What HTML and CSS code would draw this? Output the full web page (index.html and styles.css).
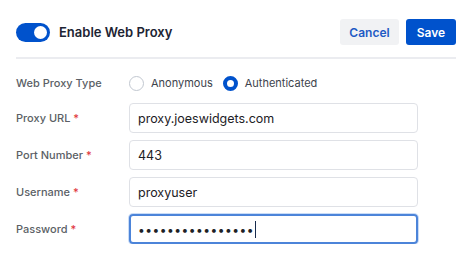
FILE: index.html
```html
<!DOCTYPE html>
<html lang="en">
<head>
  <meta charset="UTF-8" />
  <meta name="viewport" content="width=device-width, initial-scale=1.0" />
  <title>Web Proxy</title>
  <link rel="stylesheet" href="styles.css">
</head>
<body>
  <div class="panel">
    <div class="header">
      <label class="switch">
        <input type="checkbox" checked>
        <span class="slider"></span>
      </label>
      <h2>Enable Web Proxy</h2>
      <div class="actions">
        <button type="button" class="btn btn-subtle">Cancel</button>
        <button type="button" class="btn btn-primary">Save</button>
      </div>
    </div>

    <form class="form">
      <div class="row radio-row">
        <span class="label">Web Proxy Type</span>
        <label class="radio"><input type="radio" name="type"><span class="dot"></span>Anonymous</label>
        <label class="radio"><input type="radio" name="type" checked><span class="dot"></span>Authenticated</label>
      </div>
      <div class="row">
        <label class="label" for="url">Proxy URL <span class="req">*</span></label>
        <input class="field" id="url" type="text" value="proxy.joeswidgets.com">
      </div>
      <div class="row">
        <label class="label" for="port">Port Number <span class="req">*</span></label>
        <input class="field" id="port" type="text" value="443">
      </div>
      <div class="row">
        <label class="label" for="user">Username <span class="req">*</span></label>
        <input class="field" id="user" type="text" value="proxyuser">
      </div>
      <div class="row">
        <label class="label" for="pass">Password <span class="req">*</span></label>
        <div class="field focused"><span class="dots">••••••••••••••••</span><span class="caret"></span></div>
      </div>
    </form>
  </div>
</body>
</html>
```

FILE: styles.css
```css
:root {
  --blue: #0052cc;
  --text: #172b4d;
  --muted: #5e6c84;
  --border: #dfe1e6;
}

body {
  margin: 0;
  background: #fff;
  font-family: Inter, 'Noto Sans', sans-serif;
  color: var(--text);
}

.panel {
  padding: 19px 16px 0 16px;
  width: 440px;
}

.header {
  display: flex;
  align-items: center;
  height: 26px;
  padding-bottom: 12px;
  border-bottom: 2px solid #ebecf0;
}

.switch {
  position: relative;
  width: 34px;
  height: 19px;
  margin-right: 9px;
}

.switch input {
  display: none;
}

.slider {
  display: block;
  width: 34px;
  height: 19px;
  border-radius: 10px;
  background: var(--blue);
}

.slider::after {
  content: "";
  position: absolute;
  top: 3px;
  right: 3px;
  width: 13px;
  height: 13px;
  border-radius: 50%;
  background: #fff;
}

.header h2 {
  margin: 0;
  font-size: 13px;
  font-weight: 600;
  color: #1d2433;
  flex: 1;
}

.actions {
  display: flex;
  gap: 7px;
}

.btn {
  font-family: inherit;
  font-size: 12px;
  font-weight: 600;
  height: 26px;
  border: none;
  border-radius: 3px;
  padding: 0;
  cursor: pointer;
}

.btn-subtle {
  background: #f1f2f4;
  color: #1f5bc4;
  width: 59px;
}

.btn-primary {
  background: var(--blue);
  color: #fff;
  width: 50px;
}

.form {
  display: flex;
  flex-direction: column;
  gap: 7px;
  padding-top: 9px;
}

.row {
  display: flex;
  align-items: center;
  height: 30px;
}

.radio-row {
  margin-bottom: -2px;
}

.label {
  width: 113px;
  flex: none;
  font-size: 11px;
  font-weight: 500;
  color: #5b5f66;
}

.req {
  color: #e0343a;
}

.radio {
  display: flex;
  align-items: center;
  font-size: 11px;
  color: #3d434c;
  margin-right: 10px;
}

.radio input {
  display: none;
}

.dot {
  box-sizing: border-box;
  width: 15px;
  height: 15px;
  border-radius: 50%;
  border: 1.5px solid #c1c7d0;
  margin-right: 7px;
}

.radio input:checked + .dot {
  border: 4.5px solid var(--blue);
  background: #fff;
}

.field {
  box-sizing: border-box;
  width: 289px;
  height: 30px;
  border: 1px solid var(--border);
  border-radius: 4px;
  padding: 0 8px;
  font-family: inherit;
  font-size: 12.5px;
  color: #1d2125;
  outline: none;
}

.field.focused {
  display: flex;
  align-items: center;
  border: 2px solid #4c84d9;
  box-shadow: 0 0 0 1px #c9dcf7;
  padding: 0 7px;
}

.dots {
  font-size: 12px;
  letter-spacing: 0.5px;
}

.caret {
  width: 1px;
  height: 17px;
  background: #172b4d;
  margin-left: 1px;
}
```
